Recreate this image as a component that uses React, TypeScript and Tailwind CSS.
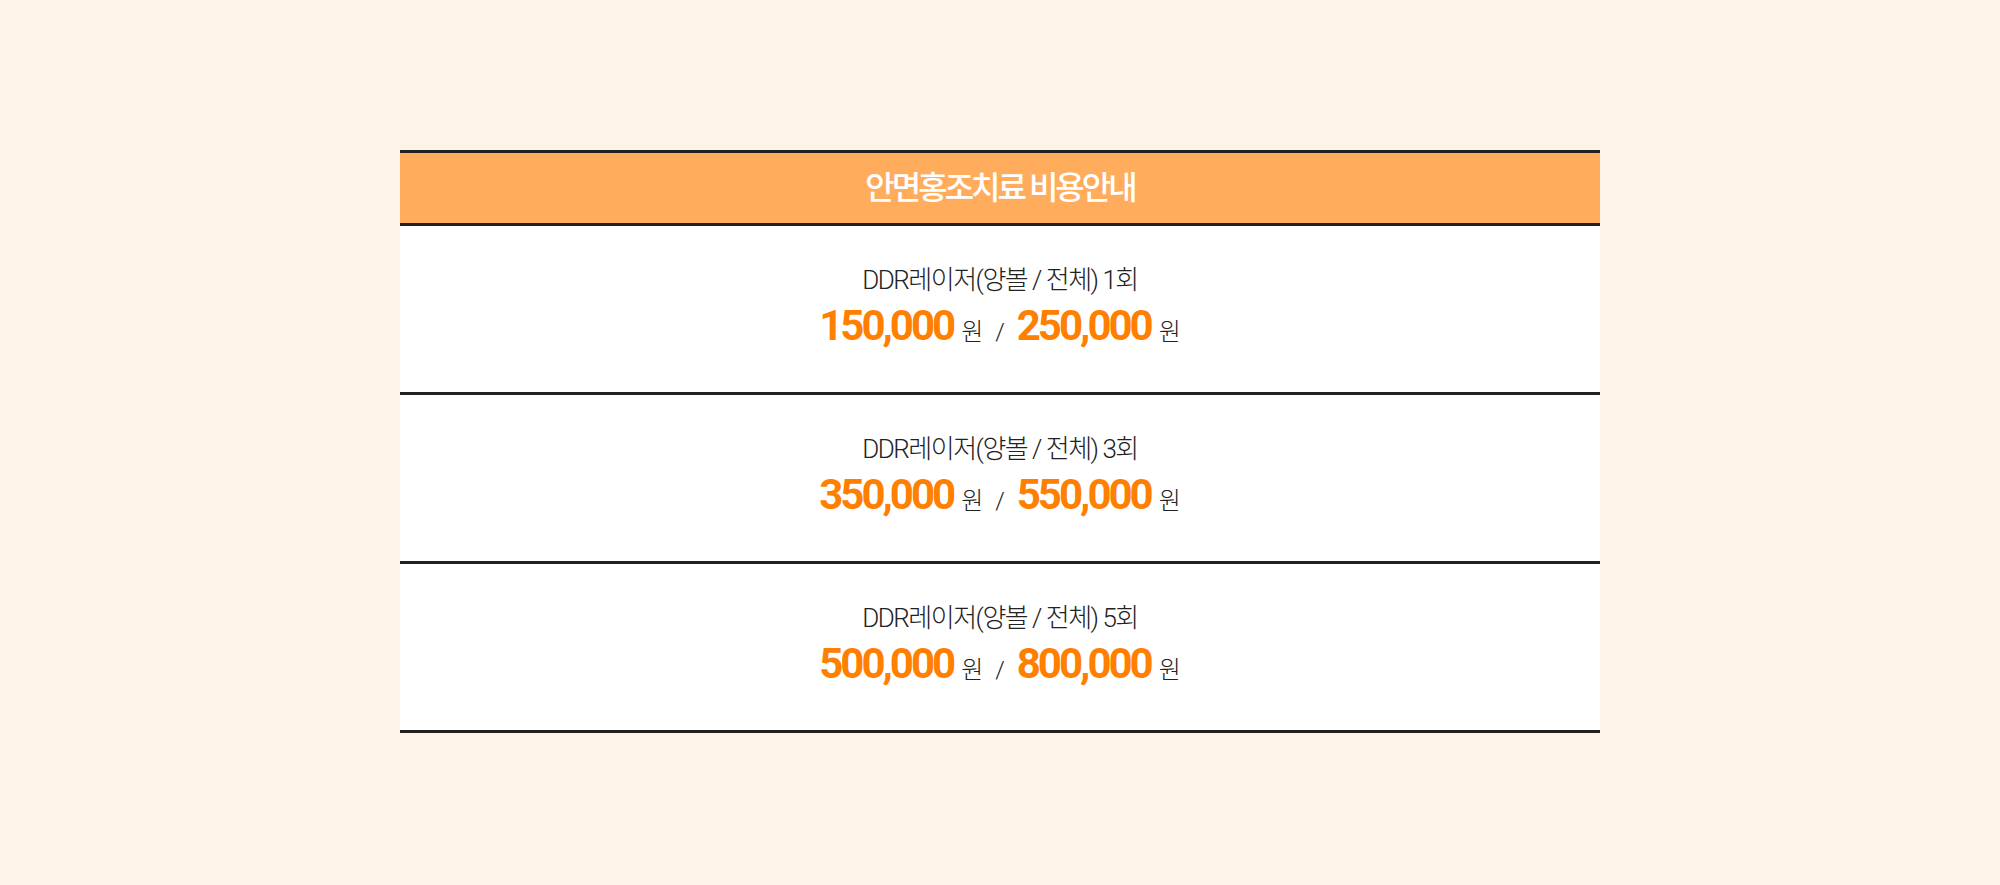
import React from 'react';

const rows = [
  { count: '1회', a: '150,000', b: '250,000' },
  { count: '3회', a: '350,000', b: '550,000' },
  { count: '5회', a: '500,000', b: '800,000' },
];

const Price = ({ value }: { value: string }) => (
  <span className="flex items-baseline">
    <span className="font-['Roboto',sans-serif] text-[42px] font-bold tracking-[-3px] text-[#ff7f00] leading-none">
      {value}
    </span>
    <span className="ml-[8px] text-[24px] font-light text-[#222] leading-none">원</span>
  </span>
);

export default function App() {
  return (
    <div className="min-h-screen w-full bg-[#fef3e7] pt-[150px] font-['Roboto','Noto_Sans_CJK_KR',sans-serif]">
      <div className="mx-auto w-[1200px]">
        {/* Header */}
        <div className="flex h-[76px] items-center justify-center border-y-[3px] border-[#222] bg-[#ffad5c]">
          <h2 className="text-[32px] font-medium tracking-[-3px] text-white">안면홍조치료 비용안내</h2>
        </div>

        {/* Rows */}
        {rows.map((row) => (
          <div
            key={row.count}
            className="flex h-[169px] flex-col items-center justify-center border-b-[3px] border-[#222] bg-white pb-[4px]"
          >
            <p className="text-[26px] font-light tracking-[-1.5px] text-[#222] leading-none">
              DDR레이저(양볼 / 전체) {row.count}
            </p>
            <div className="mt-[12px] flex items-baseline">
              <Price value={row.a} />
              <span className="mx-[12px] text-[24px] font-light text-[#222] leading-none">/</span>
              <Price value={row.b} />
            </div>
          </div>
        ))}
      </div>
    </div>
  );
}
